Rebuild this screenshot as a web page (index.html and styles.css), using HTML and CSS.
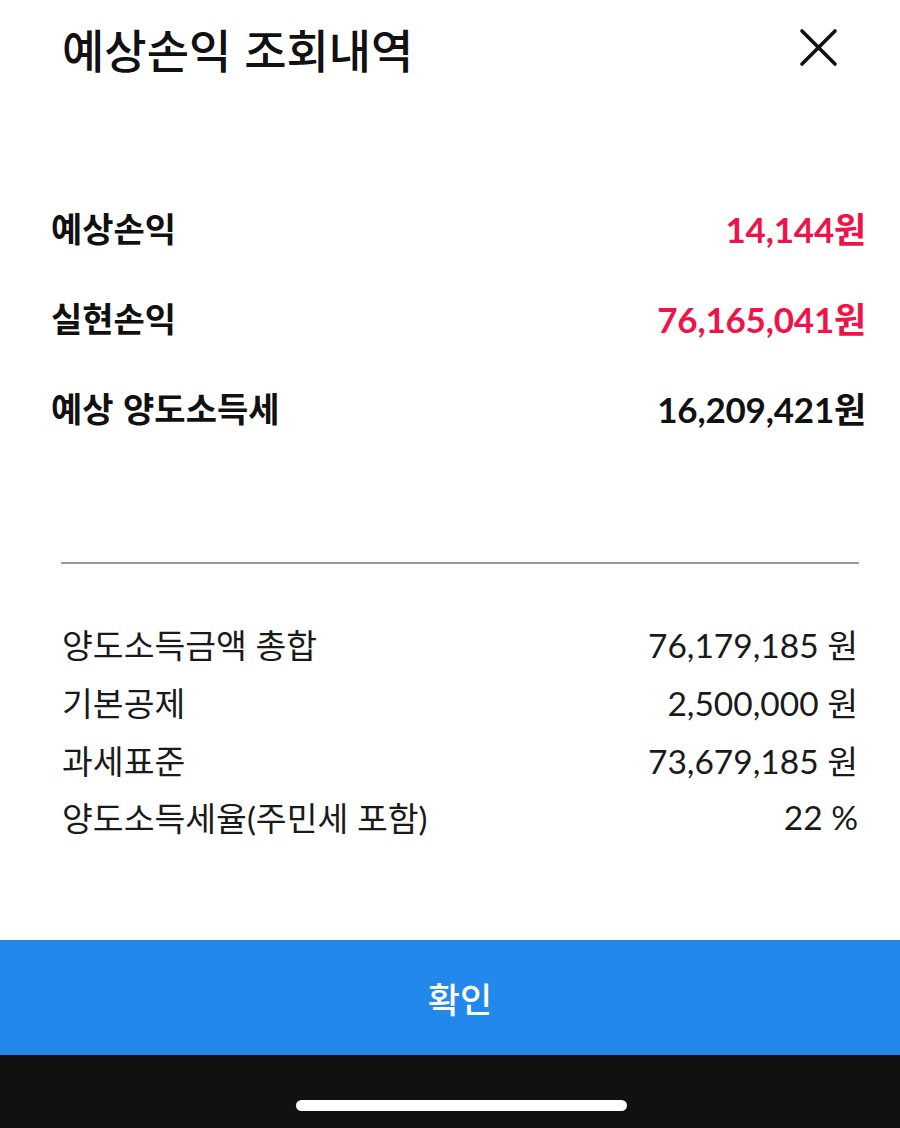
FILE: index.html
```
<!DOCTYPE html>
<html lang="ko">
<head>
<meta charset="utf-8">
<link rel="stylesheet" href="styles.css">
</head>
<body>
<div class="screen">
  <header class="header">
    <h1 class="title">예상손익 조회내역</h1>
    <button class="close" aria-label="닫기">
      <svg width="40" height="40" viewBox="0 0 40 40"><path d="M4 3 L37 36 M37 3 L4 36" stroke="#111" stroke-width="3.6" stroke-linecap="round" fill="none"/></svg>
    </button>
  </header>
  <section class="summary">
    <div class="srow"><span class="slabel">예상손익</span><span class="sval red">14,144원</span></div>
    <div class="srow"><span class="slabel">실현손익</span><span class="sval red">76,165,041원</span></div>
    <div class="srow"><span class="slabel">예상 양도소득세</span><span class="sval">16,209,421원</span></div>
  </section>
  <hr class="divider">
  <section class="details">
    <div class="drow"><span>양도소득금액 총합</span><span>76,179,185 원</span></div>
    <div class="drow"><span>기본공제</span><span>2,500,000 원</span></div>
    <div class="drow"><span>과세표준</span><span>73,679,185 원</span></div>
    <div class="drow"><span>양도소득세율(주민세 포함)</span><span>22 %</span></div>
  </section>
  <div class="spacer"></div>
  <button class="confirm">확인</button>
  <div class="homebar"><div class="pill"></div></div>
</div>
</body>
</html>
```
FILE: styles.css
```
html, body {
  margin: 0;
  padding: 0;
  background: #fff;
}
.screen {
  width: 900px;
  height: 1128px;
  display: flex;
  flex-direction: column;
  font-family: Lato, "Noto Sans CJK KR", sans-serif;
  color: #111;
  overflow: hidden;
}
.header {
  height: 96px;
  display: flex;
  align-items: center;
  justify-content: space-between;
  padding: 0 62px 0 62px;
  flex-shrink: 0;
}
.title {
  margin: 0;
  font-family: "Noto Sans CJK KR", sans-serif;
  font-weight: 500;
  font-size: 46px;
  letter-spacing: 0;
  line-height: 96px;
}
.close {
  width: 40px;
  height: 40px;
  padding: 0;
  border: 0;
  background: none;
  display: flex;
}
.summary {
  margin-top: 86px;
  padding: 0 34px 0 51px;
  display: flex;
  flex-direction: column;
}
.srow {
  height: 90px;
  display: flex;
  align-items: center;
  justify-content: space-between;
  font-weight: 700;
}
.slabel {
  font-family: "Noto Sans CJK KR", sans-serif;
  font-weight: 700;
  font-size: 34px;
}
.sval {
  font-weight: 700;
  font-size: 35px;
  letter-spacing: -0.2px;
}
.red {
  color: #f0134a;
}
.divider {
  margin: 110px 41px 0 61px;
  border: 0;
  height: 2px;
  background: #9a9a9a;
}
.details {
  margin-top: 51px;
  padding: 0 42px 0 62px;
  display: flex;
  flex-direction: column;
}
.drow {
  height: 57.7px;
  display: flex;
  align-items: center;
  justify-content: space-between;
  font-size: 33.5px;
  font-weight: 400;
  color: #1a1a1a;
}
.spacer {
  flex: 1;
}
.confirm {
  height: 115px;
  flex-shrink: 0;
  border: 0;
  background: #2388ec;
  color: #fff;
  font-family: "Noto Sans CJK KR", sans-serif;
  font-size: 35px;
  font-weight: 500;
  padding: 0 0 0 20px;
}
.homebar {
  height: 73px;
  flex-shrink: 0;
  background: #111;
  display: flex;
  align-items: flex-start;
}
.pill {
  margin-top: 45px;
  margin-left: 296px;
  width: 331px;
  height: 11px;
  border-radius: 6px;
  background: #fff;
}
```
